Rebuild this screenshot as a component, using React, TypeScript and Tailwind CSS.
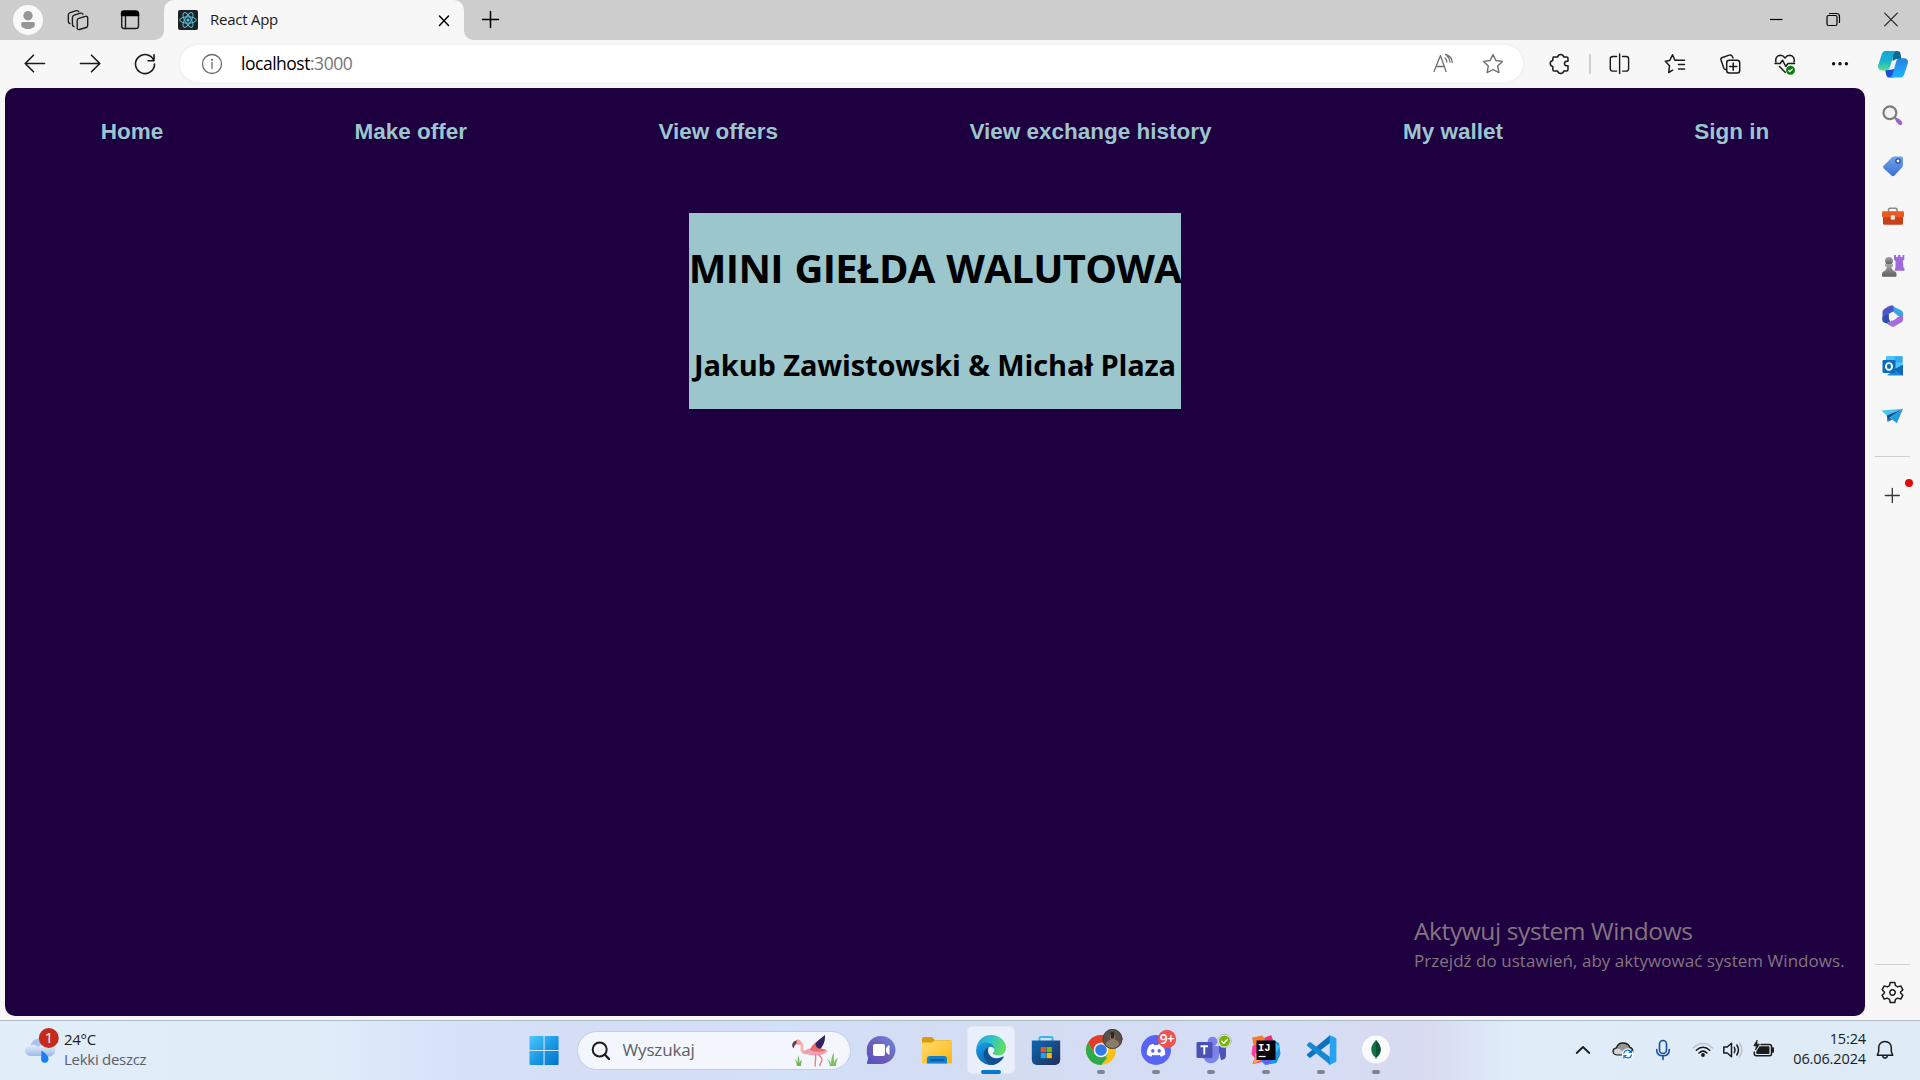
import React from 'react';

type IconProps = {
  w?: number;
  h?: number;
  color?: string;
  stroke?: number;
  className?: string;
  children: React.ReactNode;
};

function Icon({ w = 30, h = 30, color = '#1a1a1a', stroke = 1.3, className = '', children }: IconProps) {
  return (
    <svg
      width={w}
      height={h}
      viewBox={`0 0 ${w} ${h}`}
      fill="none"
      stroke={color}
      strokeWidth={stroke}
      strokeLinecap="round"
      strokeLinejoin="round"
      className={`block shrink-0 overflow-visible ${className}`}
    >
      {children}
    </svg>
  );
}

const starPath =
  'M15 5.6 L17.9 11.5 L24.4 12.4 L19.7 17 L20.9 23.6 L15 20.5 L9.1 23.6 L10.3 17 L5.6 12.4 L12.1 11.5 Z';

function TitleBar() {
  return (
    <div className="flex h-10 items-center bg-[#cdcdcd]">
      <Icon className="ml-[13px]" stroke={0}>
        <circle cx="15" cy="15" r="15" fill="#f9f9f9" />
        <circle cx="15" cy="10.7" r="4.7" fill="#979797" />
        <path d="M10 17h10a2 2 0 0 1 2 2c0 3.600-3.200 5-7 5s-7-1.400-7-5a2 2 0 0 1 2-2z" fill="#979797" />
      </Icon>
      <Icon className="ml-5" stroke={1.35}>
        <path d="M15.700 13.300l6.800-2c1.300-.3 2.200.3 2.200 1.600v7.600c0 1-.5 1.700-1.500 2l-6.800 2c-1.300.3-2.200-.3-2.200-1.600v-7.600c0-1 .5-1.700 1.500-2z" />
        <path d="M11 21.500c-1.200-.3-1.600-1.100-1.600-2.200v-6.800c0-1.300.6-2 1.800-2.400l6.300-1.900c1.300-.3 2 .1 2.400 1" />
        <path d="M6.900 18.500c-1.200-.3-1.600-1.100-1.600-2.200V10c0-1.300.6-2 1.800-2.400l6.300-1.900c1.300-.3 2 .1 2.400 1" />
      </Icon>
      <Icon className="ml-[22px]" stroke={1.4}>
        <rect x="6.700" y="6.700" width="16.800" height="16.800" rx="2.600" />
        <path d="M6.500 10.500V8.500a2.500 2.500 0 0 1 2.500-2.500h12a2.500 2.500 0 0 1 2.500 2.500v2z" fill="#000" stroke="#000" />
        <path d="M10.500 11v12.500" />
      </Icon>
      <svg width="9" height="10" className="ml-[10px] block self-end">
        <path d="M9 0v10H0a9.500 9.500 0 0 0 9-10z" fill="#f7f7f7" />
      </svg>
      <div className="flex h-10 w-[300px] items-center rounded-t-[10px] bg-[#f7f7f7] pl-[14px]">
        <svg width="20" height="20" viewBox="0 0 20 20" fill="none" stroke="#53c1de" strokeWidth="1">
          <rect width="20" height="20" rx="2" fill="#222" stroke="none" />
          <circle cx="10" cy="10" r="1.600" fill="#53c1de" stroke="none" />
          <ellipse cx="10" cy="10" rx="8.300" ry="3.200" />
          <ellipse cx="10" cy="10" rx="8.300" ry="3.200" transform="rotate(60 10 10)" />
          <ellipse cx="10" cy="10" rx="8.300" ry="3.200" transform="rotate(120 10 10)" />
        </svg>
        <span className="mt-[-2px] ml-[12px] text-[15px] leading-5 tracking-[-0.250px] text-[#1a1a1a]">React App</span>
        <Icon className="mr-[5px] ml-auto" stroke={1.5} color="#000">
          <path d="M10.500 11l9 9.500M19.500 11l-9 9.500" />
        </Icon>
      </div>
      <svg width="9" height="10" className="block self-end">
        <path d="M0 0v10h9a9.500 9.500 0 0 1-9-10z" fill="#f7f7f7" />
      </svg>
      <Icon className="ml-[3px]" stroke={1.5} color="#000">
        <path d="M6.500 14.500h16M14.500 6.500v16" />
      </Icon>
      <div className="ml-auto flex">
        <Icon className="mr-[27px]" stroke={1.2} color="#000">
          <path d="M9 14.500h12.500" strokeLinecap="butt" />
        </Icon>
        <Icon className="mr-7" stroke={1.2} color="#000">
          <rect x="9" y="10.500" width="10" height="10" rx="1.500" />
          <path d="M11.500 8.500h7a3 3 0 0 1 3 3v6" />
        </Icon>
        <Icon className="mr-[14px]" stroke={1.2} color="#222">
          <path d="M8.700 8.200l12.600 12.600M21.300 8.200L8.700 20.800" />
        </Icon>
      </div>
    </div>
  );
}

function ToolCell({ children }: { children: React.ReactNode }) {
  return <div className="flex w-[55px] shrink-0 justify-center">{children}</div>;
}

function Copilot() {
  return (
    <svg width="30" height="27" viewBox="0 0 30 27" className="block">
      <defs>
        <linearGradient id="cpA" x1="0" y1="0" x2="0" y2="1">
          <stop offset="0" stopColor="#12a3dc" />
          <stop offset=".55" stopColor="#18b5c8" />
          <stop offset="1" stopColor="#5ee08e" />
        </linearGradient>
        <linearGradient id="cpB" x1="0" y1="0" x2="0" y2="1">
          <stop offset="0" stopColor="#2b7fe0" />
          <stop offset="1" stopColor="#19b6ff" />
        </linearGradient>
      </defs>
      <path d="M14 0h5.500c2 0 2.600 1 3 2.600L23.500 8h-5l-4 2z" fill="#0b6a94" />
      <path d="M16 26.500h-4.500c-2 0-2.700-1-3.200-2.600L7 18.800h6l3-1z" fill="#1950d8" />
      <path d="M7.500 0h11c-1.700.6-2.400 2-3 4l-3.300 11.500c-.7 2.500-2 4-4.700 4H4c-3 0-4.700-2-3.700-5.500L3.500 4C4.300 1.500 5.500 0 7.500 0z" fill="url(#cpA)" />
      <path d="M22.500 26.500H12c1.500-.6 2.200-2 2.800-4L18 11c.7-2.500 2-3.700 4.500-3.700H26c3 0 4.700 2 3.700 5.400l-3.200 9.800c-.8 2.500-2 4-4 4z" fill="url(#cpB)" />
    </svg>
  );
}

function Toolbar() {
  return (
    <div className="flex h-12 items-center bg-[#f7f7f7] pl-[7.500px]">
      <ToolCell>
        <Icon stroke={1.6}>
          <path d="M24.500 14.500H5.500M13.500 6.200L5.200 14.500l8.300 8.300" />
        </Icon>
      </ToolCell>
      <ToolCell>
        <Icon stroke={1.6}>
          <path d="M5.500 14.500h19M16.500 6.200l8.300 8.300-8.300 8.300" />
        </Icon>
      </ToolCell>
      <ToolCell>
        <Icon stroke={1.6}>
          <path d="M23.800 11.500A9.500 9.500 0 1 0 24.500 15M24 5.800v6h-6" />
        </Icon>
      </ToolCell>
      <div className="mt-[-1px] ml-[7.500px] flex h-[37px] w-[1343px] shrink-0 items-center rounded-full bg-white shadow-[0_0_4px_rgba(0,0,0,0.06)]">
        <Icon className="mt-px ml-[17px]" color="#6b6b6b" stroke={1.3}>
          <circle cx="15" cy="15" r="9.500" />
          <path d="M15 13.500v6" />
          <circle cx="15" cy="10.800" r=".5" />
        </Icon>
        <span className="mt-[-1px] ml-[14px] text-[17.500px] leading-6 tracking-[-0.480px] text-black">
          localhost<span className="text-[#767676]">:3000</span>
        </span>
        <Icon className="mt-px ml-auto" color="#6f6f6f" stroke={1.3}>
          <path d="M6 22.500L12.500 6.500L18 22.500M8.500 17.500h7.500" />
          <path d="M17 9c1.200 1 1.800 2.300 1.900 4M19.200 7c1.700 1.500 2.600 3.500 2.700 6M17.500 5.500c4 1 6.500 4 6.800 8" />
        </Icon>
        <Icon className="mt-px mr-[15.500px] ml-[19.500px]" color="#6f6f6f" stroke={1.4}>
          <path d={starPath} />
        </Icon>
      </div>
      <div className="ml-[9px]" />
      <ToolCell>
        <Icon stroke={1.5}>
          <path d="M8 9h4.300a3.200 3.200 0 0 1 6.200 0h2.700a1.500 1.500 0 0 1 1.500 1.500v2.700h-1.200a2.300 2.300 0 0 0 0 4.600h1.200v3.700a1.500 1.500 0 0 1-1.500 1.500h-2.700a3.200 3.200 0 0 1-6.200 0H9a1.500 1.500 0 0 1-1.500-1.500v-3a3.100 3.100 0 0 1 0-6.100V10.500A1.500 1.500 0 0 1 9 9z" transform="translate(0.3 -1)" />
        </Icon>
      </ToolCell>
      <div className="mr-[1px] ml-[2px] h-5 w-[2px] shrink-0 bg-[#d0d0d0]" />
      <ToolCell>
        <Icon stroke={1.4}>
          <path d="M12 7.500H8A2.300 2.300 0 0 0 5.700 9.800v10A2.300 2.300 0 0 0 8 22.100h4M18 7.500h3.700A2.300 2.300 0 0 1 24 9.800v10a2.300 2.300 0 0 1-2.300 2.300H18M15 5v19.500" transform="translate(-.4 0)" />
        </Icon>
      </ToolCell>
      <ToolCell>
        <Icon stroke={1.5}>
          <path d="M16.500 11.300h-1.600L12.500 5.800 9.700 11.500 5.300 12.300l4.200 4.500-.8 6.700 4-2.300" />
          <path d="M16.500 11.300h8M18.500 15.500h6M18.500 20h6" />
        </Icon>
      </ToolCell>
      <ToolCell>
        <Icon stroke={1.5}>
          <path d="M10.500 20.500c-1-.2-1.600-.8-1.900-1.900L6 10.900c-.3-1.200.1-2 1.300-2.400l7-2.400c1.400-.4 2.400 0 3 1.400l.7 1.500" />
          <rect x="11.700" y="11.200" width="13" height="12.800" rx="2.500" />
          <path d="M18.200 14v7.200M14.600 17.600h7.200" />
        </Icon>
      </ToolCell>
      <ToolCell>
        <Icon stroke={1.5}>
          <path d="M6 13c-1-3.500 1-6.600 4.200-6.700 2 0 3.600 1 4.800 2.700 1.200-1.700 2.800-2.700 4.800-2.700 3.200.1 5.200 3.200 4.200 6.700" />
          <path d="M5 14.500h5.200l2.300-3.300 3.300 6.300 2.200-3h6.500M9.500 17.500l5.700 5.700" />
          <circle cx="20.500" cy="21.300" r="4.500" fill="#107c10" stroke="none" />
          <path d="M18.700 21.500l1.200 1.200 2.400-2.500" stroke="#fff" strokeWidth="1.200" />
        </Icon>
      </ToolCell>
      <ToolCell>
        <Icon stroke={0}>
          <circle cx="8.600" cy="14.700" r="1.700" fill="#111" />
          <circle cx="15" cy="14.700" r="1.700" fill="#111" />
          <circle cx="21.400" cy="14.700" r="1.700" fill="#111" />
        </Icon>
      </ToolCell>
      <div className="ml-[11px]">
        <Copilot />
      </div>
    </div>
  );
}

const navItems = ['Home', 'Make offer', 'View offers', 'View exchange history', 'My wallet', 'Sign in'];

function Page() {
  return (
    <main className="relative flex h-[928px] w-[1860px] shrink-0 flex-col items-center overflow-hidden rounded-[10px] bg-[#1e0041]">
      <nav className="flex h-[87px] w-full items-center justify-around font-['Liberation_Sans',Arial,sans-serif] text-[22.500px] font-bold text-[#9bc6cc]">
        {navItems.map((n) => (
          <a key={n}>{n}</a>
        ))}
      </nav>
      <header className="mt-[38px] flex h-[196px] w-[492px] flex-col items-center bg-[#9bc6cc] pt-[28px] whitespace-nowrap text-black">
        <h1 className="text-[40px] leading-[54px] font-bold tracking-[-0.700px] [word-spacing:2px]">MINI GIEŁDA WALUTOWA</h1>
        <h2 className="mt-[50px] text-[29px] leading-10 font-bold tracking-[-0.130px]">Jakub Zawistowski &amp; Michał Plaza</h2>
      </header>
      <div className="absolute right-5 bottom-[42px] w-[431px] whitespace-nowrap text-[#83757f]">
        <div className="text-[24.500px] leading-[34px] tracking-[-0.400px]">Aktywuj system Windows</div>
        <div className="text-[17px] leading-[26px] tracking-[0.040px]">Przejdź do ustawień, aby aktywować system Windows.</div>
      </div>
    </main>
  );
}

function SideCell({ children }: { children: React.ReactNode }) {
  return <div className="flex h-[50px] items-center">{children}</div>;
}

function Sidebar() {
  return (
    <aside className="flex flex-1 flex-col items-center bg-[#f7f7f7] pt-[3px]">
      <SideCell>
        <Icon stroke={2.2} color="#7d7d7d">
          <circle cx="11.900" cy="11.800" r="6.400" fill="#f2f2f2" />
          <path d="M16.500 16.300l2 2" />
          <path d="M19.800 19.600l2.500 2.500" stroke="#9a64d0" strokeWidth="4.200" />
        </Icon>
      </SideCell>
      <SideCell>
        <Icon stroke={0} className="-ml-px">
          <defs>
            <linearGradient id="tag" x1="0" y1="0" x2="0" y2="1">
              <stop offset="0" stopColor="#6fa5ee" />
              <stop offset="1" stopColor="#3f6fd0" />
            </linearGradient>
          </defs>
          <path d="M17 5.500h7c1.500 0 2 .6 2 2v6.500c0 1-.3 1.700-1 2.400l-7.500 8c-1 1-2 1-3 0l-7.700-7c-1-1-1-2 0-3l8-8c.6-.6 1.300-.9 2.200-.9z" fill="url(#tag)" />
          <circle cx="21" cy="10" r="2.100" fill="#fff" stroke="#2c4a9a" strokeWidth="1.300" />
        </Icon>
      </SideCell>
      <SideCell>
        <Icon stroke={0} className="mt-[2px] -ml-px">
          <path d="M11.500 9.500V8c0-1.200.6-1.800 1.800-1.800h5c1.200 0 1.800.6 1.800 1.800v1.500" fill="none" stroke="#8a8a8a" strokeWidth="1.600" />
          <rect x="6" y="13" width="20" height="9.800" rx="1.500" fill="#c8401a" />
          <rect x="5" y="9.200" width="22" height="6" rx="1.300" fill="#e85a22" />
          <rect x="13.800" y="13.200" width="4.200" height="4.600" rx="1.200" fill="#e2e2e2" />
        </Icon>
      </SideCell>
      <SideCell>
        <Icon stroke={0} className="-ml-px">
          <defs>
            <linearGradient id="pawn" x1="0" y1="0" x2="0" y2="1">
              <stop offset="0" stopColor="#a5a5a5" />
              <stop offset="1" stopColor="#606060" />
            </linearGradient>
          </defs>
          <path d="M17 4h2v2h2V4h2.500v2h2V4h1.800v4.500l-1.500 1.500.7 6.500 1 1v2.300H17.500l1-3.500v-6L17 8.500z" fill="#9f6bdc" />
          <circle cx="12" cy="9.800" r="3.900" fill="url(#pawn)" />
          <path d="M8 13.200h8v2.200h-1.500c0 2 .6 3 2.500 4.500 1.500.5 2.500 1.200 2.500 3.600v1.200c0 .6-.3 1-1 1H6c-.7 0-1-.4-1-1v-1.200c0-2.400 1-3.100 2.500-3.600 1.700-1.500 2.300-2.500 2.300-4.500H8z" fill="url(#pawn)" />
        </Icon>
      </SideCell>
      <SideCell>
        <Icon stroke={0} className="-ml-px">
          <path d="M14.500 4.500L24 9.300c1.300.7 2 1.700 2 3v5.500l-6-3.500-4-4-5 2.800z" fill="#35a8e4" />
          <path d="M14.500 4.500c-1.500 0-2.500.5-7.500 3.700C6 9 5.500 10 5.500 11.500v7c0 1.300.7 2.300 1.800 3l4.200 1.500V13l5-2.800V5c-.7-.4-1.300-.5-2-.5z" fill="#4a55c8" />
          <path d="M5.500 16v3c0 1.200.8 2 1.800 2.500 2 .8 4 .3 6-1L12 18v-5z" fill="#2b4fb0" />
          <path d="M26 14v4.500c0 1.300-.6 2.200-1.800 3l-6.400 3.800c-1.200.7-2.400.7-3.600 0L8.500 22c1.500.2 2.500-.1 4-1l8-4.700z" fill="#a56cdc" />
          <path d="M15.700 11.200l3.800 2.200v4l-3.800 2.200-3.800-2.200v-4z" fill="#f7f7f7" />
        </Icon>
      </SideCell>
      <SideCell>
        <Icon stroke={0} className="-ml-px">
          <rect x="9" y="5" width="16.500" height="16" rx="1.200" fill="#4ec3f5" />
          <rect x="17.500" y="5.500" width="8" height="6" fill="#35abef" />
          <path d="M10 24.500h15c.7 0 1-.4 1-1V13.500l-9 5z" fill="#1a86d8" />
          <path d="M17 18.500l9-4.500v9.500c0 .5 0 .6-.3.900z" fill="#1367b5" />
          <rect x="5.500" y="9" width="13" height="13" rx="1.200" fill="#0b6cc4" />
          <ellipse cx="12" cy="15.500" rx="3.100" ry="3.400" fill="none" stroke="#fff" strokeWidth="1.900" />
        </Icon>
      </SideCell>
      <SideCell>
        <Icon stroke={0} className="-ml-px">
          <path d="M4.500 9.500L26 7.800 10 15z" fill="#4fc3f0" />
          <path d="M10 14.500L26 7.800l-13.500 9L10.500 21z" fill="#0a4f92" />
          <path d="M13 16.500L26 7.800l-6.200 14.400z" fill="#219bdf" />
          <path d="M10.500 21l2.300-4.500 2.400 2z" fill="#115fa8" />
        </Icon>
      </SideCell>
      <div className="mt-[15px] h-px w-[35px] bg-[#cfcfcf]" />
      <div className="relative mt-[23px]">
        <Icon stroke={1.300} color="#333">
          <path d="M7.300 15.500h14M14.300 8.500v14" />
        </Icon>
        <div className="absolute top-[-1px] left-[27px] size-2 rounded-full bg-[#e00b0b]" />
      </div>
      <div className="mt-auto h-px w-[35px] bg-[#cfcfcf]" />
      <Icon className="mt-[13px] mb-[12px]" stroke={1.500}>
        <g transform="translate(14.500 14.500)">
          <path d="M-2.300-10h4.600l.7 3.200 2.200 1.200 3.100-1 2.100 3.900-2.300 2.200v1l2.300 2.200-2.100 3.900-3.100-1-2.200 1.200-.7 3.200h-4.600l-.7-3.200-2.200-1.200-3.100 1-2.100-3.900 2.300-2.200v-1l-2.300-2.200 2.100-3.900 3.100 1 2.200-1.200z" />
          <circle r="2.700" />
        </g>
      </Icon>
    </aside>
  );
}

function AppCell({ state, children }: { state?: 'active' | 'running'; children: React.ReactNode }) {
  return (
    <div className="relative flex h-[59px] w-[55px] shrink-0 justify-center">
      {state === 'active' && <div className="absolute top-[5px] left-[3px] h-[48px] w-12 rounded-[5px] border border-[#e3e8f3] bg-[#eaf0fb]" />}
      <div className="relative mt-[14px]">{children}</div>
      {state === 'active' && <div className="absolute top-[49px] left-[17px] h-1 w-5 rounded-full bg-[#0078d4]" />}
      {state === 'running' && <div className="absolute top-[49px] left-[23px] h-1 w-2 rounded-full bg-[#7f8590]" />}
    </div>
  );
}

function Flamingo() {
  return (
    <svg width="50" height="34" viewBox="0 0 50 34" fill="none" strokeLinecap="round" className="block">
      <path d="M6 32c-.5-3-1-5-2.500-7 2 1 2.500 2.500 3 4 0-3 .3-5 1-7.500.8 2.500 1 5 .9 7.500.8-1.500 1.600-2.500 2.800-3.500-.8 2.500-1.200 4.500-1.200 6.500z" fill="#74b55c" />
      <path d="M39 32c-.5-3-1.500-5-3-7 2.500 1 3.500 3 4 5 0-4 .8-8 3-12-.2 4-.2 7 0 11 .8-3 2-4 4-5-1.500 3-2 5-2 8z" fill="#82bd63" />
      <path d="M7.500 8.500c3 .2 4 2 3.500 5-.5 3.500.5 5 4 5.500" stroke="#f5b0a8" strokeWidth="2.800" />
      <circle cx="7" cy="8.300" r="2.700" fill="#f3a39c" />
      <path d="M5.500 6.500C2.500 7 .8 9.500 1.300 12.500l1.200 2c.8-1.800.8-3.500 3-5z" fill="#5b3a5a" />
      <path d="M12 17.500c3-2 7-3.500 11-3.500 5 0 9 1.500 13.500 3-3 3.500-7.500 4.500-12 4.500s-9-.8-12.500-4z" fill="#f0a0ae" />
      <path d="M19 16c1.500-6 8-9 15-14.500 0 6-1.500 10-4 13l6 1.500c-5 2-12 2.500-17 0z" fill="#ea6b70" />
      <path d="M24.500 9.500c2.500-3.500 5.500-5 9.500-8.500.2 6-1.300 9.500-4.500 13.500-3 0-5-2-5-5z" fill="#2f2363" />
      <path d="M24.500 21c.6 4-.6 7-.3 11M28 21c2 2.500 3.500 3 3 5l-2.300 5.500" stroke="#ee7f86" strokeWidth="1.400" />
    </svg>
  );
}

function Taskbar() {
  return (
    <footer className="flex h-[60px] items-start border-t border-[#b0bac4] bg-[linear-gradient(90deg,#e1edf8_0%,#e0ecf8_17%,#d7e3fb_23%,#d5def5_30%,#d2e0f8_41%,#d4dcf2_52%,#d5def6_66%,#d7daf0_74%,#e0edf9_79%,#deebf7_100%)]">
      <div className="flex h-[59px] w-[517px] shrink-0 items-start pl-[25px]">
        <svg width="40" height="40" viewBox="0 0 40 40" className="mt-[7px] block">
          <defs>
            <linearGradient id="cloud" x1="0" y1="0" x2="0" y2="1">
              <stop offset="0" stopColor="#e6eefb" />
              <stop offset="1" stopColor="#9dbbea" />
            </linearGradient>
          </defs>
          <circle cx="14" cy="19" r="8.500" fill="#a9c3ef" />
          <circle cx="23" cy="22" r="7" fill="#a9c3ef" />
          <path d="M6 17.500c1-1 5-1.500 7 1.500 1-2 5-2.500 7-.5 6-3 10 0 10 3.500 0 4-3 6-6 6H7c-4 0-7-2-7-5.500 0-3 3-5 6-5z" fill="url(#cloud)" />
          <path d="M16.500 22.500c3 2 7 5 7 8.500a3.700 3.700 0 0 1-7.400 0z" fill="#1a7df0" />
          <circle cx="23.800" cy="10" r="10" fill="#c42b1c" />
          <text x="23.800" y="15" textAnchor="middle" fontSize="14.500" fill="#fff" fontFamily="Open Sans">1</text>
        </svg>
        <div className="mt-[8px] -ml-[1px] text-[15px] leading-5 tracking-[-0.280px]">
          <div className="text-[#1b1b1b]">24°C</div>
          <div className="text-[#5b6067]">Lekki deszcz</div>
        </div>
      </div>
      <AppCell>
        <svg width="30" height="30" viewBox="0 0 30 30" className="-ml-px block">
          <defs>
            <linearGradient id="win" x1="0" y1="0" x2="1" y2="1">
              <stop offset="0" stopColor="#4cc8fb" />
              <stop offset=".5" stopColor="#1b9be6" />
              <stop offset="1" stopColor="#0072cc" />
            </linearGradient>
          </defs>
          <path d="M1.500 1h13v14h-14V2a1 1 0 0 1 1-1zM15.600 1h13a1 1 0 0 1 1 1v13h-14zM.5 16h14v14h-13a1 1 0 0 1-1-1zM15.600 16h14v13a1 1 0 0 1-1 1h-13z" fill="url(#win)" />
        </svg>
      </AppCell>
      <div className="mt-[10px] ml-[4.500px] flex h-[39px] w-[274px] shrink-0 items-center rounded-full border border-[#c3cde0] bg-[#f3f6fd]">
        <svg width="20" height="20" viewBox="0 0 20 20" fill="none" stroke="#1d1d1d" className="ml-[13px] block">
          <circle cx="8.700" cy="8.500" r="7" strokeWidth="2" />
          <path d="M13.700 13.500l4.300 4.500" strokeWidth="2.400" strokeLinecap="round" />
        </svg>
        <span className="mt-[-1px] ml-[12px] text-[17px] leading-6 tracking-[-0.150px] text-[#5c5f66]">Wyszukaj</span>
        <div className="mr-[9px] ml-auto">
          <Flamingo />
        </div>
      </div>
      <div className="ml-[3px] flex shrink-0">
        <AppCell>
          <Icon stroke={0}>
            <defs>
              <linearGradient id="chat" x1="1" y1="0" x2="0" y2="1">
                <stop offset="0" stopColor="#6d8ae0" />
                <stop offset=".5" stopColor="#7060b8" />
                <stop offset="1" stopColor="#5450c0" />
              </linearGradient>
            </defs>
            <path d="M15 1c8 0 14.500 6 14.500 13.800C29.500 22.500 23 29 15 29H2c-1 0-1.300-.8-1-1.500l1.200-4.200A13.500 13.500 0 0 1 .8 15C.8 7 7 1 15 1z" fill="url(#chat)" />
            <rect x="7" y="9" width="12" height="12" rx="2" fill="#fff" />
            <path d="M20 13l2.500-2.500c.5-.4 1-.3 1 .5v8c0 .8-.5.900-1 .5L20 17z" fill="#fff" />
          </Icon>
        </AppCell>
        <AppCell>
          <Icon w={31} stroke={0}>
            <defs>
              <linearGradient id="fold" x1="0" y1="0" x2="1" y2="1">
                <stop offset="0" stopColor="#ffdb6e" />
                <stop offset="1" stopColor="#fcb714" />
              </linearGradient>
            </defs>
            <path d="M1 4a2 2 0 0 1 2-2h8l3 3.200h15.500a1 1 0 0 1 1 1V12H1z" fill="#dd9a0c" />
            <path d="M1 9c0-1 .5-1.500 1.500-1.500H11l2.500-2h16c1 0 1.500.5 1.500 1.500v20.500c0 .6-.4 1-1 1H2c-.6 0-1-.4-1-1z" fill="url(#fold)" />
            <path d="M6 28.500V24a3 3 0 0 1 3-3h14a3 3 0 0 1 3 3v4.500z" fill="#1180cf" />
            <path d="M10 25h12.500" stroke="#0a4f8c" strokeWidth="1.400" />
          </Icon>
        </AppCell>
        <AppCell state="active">
          <Icon stroke={0}>
            <defs>
              <linearGradient id="edA" x1="0" y1="0" x2="1" y2=".3">
                <stop offset="0" stopColor="#2b9de0" />
                <stop offset=".5" stopColor="#2fc0d0" />
                <stop offset="1" stopColor="#5fdc62" />
              </linearGradient>
              <linearGradient id="edB" x1="0" y1="0" x2=".6" y2="1">
                <stop offset="0" stopColor="#1ba2e2" />
                <stop offset="1" stopColor="#0c62b8" />
              </linearGradient>
            </defs>
            <path d="M.2 14C1 6 7 0 15 0c8.500 0 15 6 15 12.500 0 5-3.500 8-8 8-3 0-5.200-1-5.200-2.200 0-1 1.500-1.600 1.500-4 0-3-3-5.300-7-5.300-5 0-9 2-11.100 5z" fill="url(#edA)" />
            <path d="M0 15.500C1 10 6 7.500 11 7.800c4.500.3 7.300 3.200 7.300 6.500-1-2-3-2.800-5-2.300-3 .8-5 4-4.300 8 .7 4.500 4.500 8.300 10 9.500A15 15 0 0 1 0 15.500z" fill="url(#edB)" />
            <path d="M13 12c-1.500 2-1.300 5 0 7.300 2.500 4.200 8.500 5.200 14 2.200.7-.3 1.100.2.700.8A15 15 0 0 1 17 29.900c-5-.9-9-5-9.300-10C7.500 16 10 12.800 13 12z" fill="#134f93" />
          </Icon>
        </AppCell>
        <AppCell>
          <Icon stroke={0}>
            <defs>
              <linearGradient id="store" x1="0" y1="0" x2="1" y2="1">
                <stop offset="0" stopColor="#0d67b5" />
                <stop offset="1" stopColor="#242e58" />
              </linearGradient>
            </defs>
            <path d="M8.500 6V3.500C8.500 2.500 9 2 10 2h10c1 0 1.500.5 1.500 1.500V6" fill="none" stroke="#35b8ee" strokeWidth="1.900" />
            <path d="M.8 5.500h28.400V25a5 5 0 0 1-5 5H5.800a5 5 0 0 1-5-5z" fill="url(#store)" />
            <rect x="9.700" y="12" width="5.200" height="5.200" fill="#f25022" />
            <rect x="15.600" y="12" width="5.200" height="5.200" fill="#7fba00" />
            <rect x="9.700" y="18" width="5.200" height="5.200" fill="#16a6ee" />
            <rect x="15.600" y="18" width="5.200" height="5.200" fill="#ffb902" />
          </Icon>
        </AppCell>
        <AppCell state="running">
          <Icon stroke={0}>
            <circle cx="15" cy="15" r="15" fill="#fbc116" />
            <path d="M2 7.500A15 15 0 0 1 28 7.500H15L8.500 18.800z" fill="#e33b2e" />
            <path d="M2 7.500L8.500 18.800 15 22.500h6.500L15 30A15 15 0 0 1 2 7.500z" fill="#2da94f" />
            <path d="M21.500 18.800L15 30l-2-7.500z" fill="#2da94f" />
            <circle cx="15" cy="15" r="7.300" fill="#f4f4f4" />
            <circle cx="15" cy="15" r="5.800" fill="#3079e8" />
            <circle cx="26.500" cy="4" r="10" fill="#5a5046" />
            <path d="M19.500 11c0-4 3-5.500 5-6.500-1.500-2-1-6 2-6s3.500 4 2 6c3 .8 5 2.500 5 6.500a10 10 0 0 1-14 0z" fill="#8b7b69" />
            <path d="M24.500-2c1-1.500 3-1.500 4 0l-.5 5.500h-3z" fill="#2c2723" />
            <circle cx="26.500" cy="4" r="9.500" fill="none" stroke="#4a443d" strokeWidth="1" />
          </Icon>
        </AppCell>
        <AppCell state="running">
          <Icon stroke={0}>
            <circle cx="15" cy="15" r="15" fill="#5865f2" />
            <path d="M9 10.200c1.500-.8 3-1.200 4-1.200l.6 1.200c1.300-.2 2.500-.2 3.800 0L18 9c1.300.1 2.800.5 4 1.200 2 3 3 6 2.800 9.300-1.500 1.200-3 1.900-4.500 2.200l-1-1.800c-2.500.6-5 .6-7.500 0l-1 1.800c-1.500-.3-3-1-4.500-2.200C6 16.200 7 13.200 9 10.200z" fill="#fff" transform="translate(-.5 0)" />
            <ellipse cx="11.800" cy="15.800" rx="1.700" ry="1.900" fill="#5865f2" />
            <ellipse cx="18.200" cy="15.800" rx="1.700" ry="1.900" fill="#5865f2" />
            <circle cx="26" cy="4" r="9.200" fill="#ee5350" />
            <text x="26" y="8.800" textAnchor="middle" fontSize="13.500" fill="#fff" fontFamily="Open Sans" fontWeight="600" letterSpacing="-.5">9+</text>
          </Icon>
        </AppCell>
        <AppCell state="running">
          <Icon stroke={0}>
            <path d="M21.500 11H30v9.500c0 3-2.500 4.500-5 4.500z" fill="#4c54b8" />
            <circle cx="16.500" cy="6.500" r="4.800" fill="#7b83eb" />
            <path d="M8 11h15v9.500a8 8 0 0 1-15.500 2.500z" fill="#7b83eb" />
            <rect x=".5" y="7" width="16" height="16" rx="1.200" fill="#4a52b5" />
            <path d="M4.500 11.200h7.500M8.300 11.200v8.300" stroke="#fff" strokeWidth="1.900" strokeLinecap="butt" />
            <circle cx="28.500" cy="6" r="7" fill="#f4f6fb" />
            <circle cx="28.500" cy="6" r="6.700" fill="none" stroke="#8d98a0" strokeWidth=".7" />
            <circle cx="28.500" cy="6" r="5.500" fill="#79b300" />
            <path d="M25.800 6.200l2 2 3.500-3.700" fill="none" stroke="#fff" strokeWidth="1.500" />
          </Icon>
        </AppCell>
        <AppCell state="running">
          <Icon stroke={0}>
            <path d="M1 2.500L11 .5l6 6-6 20L1.500 29 4 23 .5 19.500 3 12z" fill="#f7792e" />
            <path d="M1.500 11L7 9l4 18-9.500 2L4 23 .5 19z" fill="#fd3d9c" />
            <path d="M4 18l8 6-10 5 2.500-6z" fill="#f9b233" />
            <path d="M14 3l6-2.800L22 5l6 3 1.500 11-4 9L14 30l-4-4z" fill="#2390e8" />
            <path d="M20 .3L22 5l-6 1-3-3z" fill="#fc2b68" />
            <path d="M23 7l5.500 4.500-3 6z" fill="#38c6f4" />
            <path d="M12 24l7 0-2 6-5-3z" fill="#6b57ff" />
            <rect x="5.500" y="5.500" width="19" height="19.500" fill="#0b0208" />
            <text x="7" y="16" fontSize="10.500" fill="#fff" fontFamily="Liberation Mono" fontWeight="700">IJ</text>
            <path d="M7.700 21.500h7" stroke="#fff" strokeWidth="1.300" strokeLinecap="butt" />
          </Icon>
        </AppCell>
        <AppCell state="running">
          <Icon stroke={0}>
            <path d="M24 .3L1.300 19c-.6.6-.6 1.200 0 1.800l1.800 1.600c.6.500 1.100.5 1.700.1L24 8z" fill="#0c72bd" />
            <path d="M24 29.700L1.300 11c-.6-.6-.6-1.200 0-1.800l1.800-1.600c.6-.5 1.100-.5 1.700-.1L24 22z" fill="#1787d2" />
            <path d="M22.300.4c.6-.4 1.200-.4 1.900-.1l5 2.400c.9.400 1.200 1 1.200 1.800v21c0 .8-.3 1.400-1.200 1.800l-5 2.400c-.9.400-1.700.2-2.400-.5.900.5 1.900.1 1.900-1V1.800c0-1.300-.7-1.700-1.400-1.400z" fill="#27a4f0" />
          </Icon>
        </AppCell>
        <AppCell state="running">
          <Icon stroke={0}>
            <circle cx="15" cy="14.500" r="14" fill="#fafafa" />
            <path d="M15 5c2 2.500 4.700 5 4.700 9.500 0 3.500-2 6.500-4.200 8L15.300 24h-.6l-.2-1.500c-2.200-1.500-4.200-4.500-4.200-8C10.300 10 13 7.500 15 5z" fill="#12704a" />
            <path d="M15 5c2 2.500 4.700 5 4.700 9.500 0 3.500-2 6.500-4.500 8z" fill="#0b5438" />
          </Icon>
        </AppCell>
      </div>
      <div className="mt-[14px] ml-auto flex items-start">
        <Icon stroke={1.800}>
          <path d="M8.700 18l6.300-6 6.300 6" />
        </Icon>
        <Icon className="ml-[10px]" stroke={1.300}>
          <path d="M9 19.800c-3 0-4-2-4-3.500 0-2 1.500-3.300 3.500-3.500C9.500 9.500 12 8 15 8c3.500 0 6 1.700 6.800 4.300 2 .5 3 2 3 3.700 0 2-1.500 3.800-4 3.800z" fill="#969696" />
          <path d="M6 16.500c0-2 2-3 4-2.800 3 .2 5 3 7 5.500H8.500C7 19.200 6 18 6 16.500z" fill="#d4d4d4" stroke="none" />
          <circle cx="19.700" cy="19" r="5.800" fill="#fff" stroke="none" />
          <path d="M15.900 18.200a3.900 3.900 0 0 1 7.200-1.200M23.500 19.800a3.900 3.900 0 0 1-7.200 1.200M23.500 15v2.300h-2.300M15.900 23v-2.300h2.300" stroke="#1173cc" strokeWidth="1.200" />
        </Icon>
        <Icon className="ml-[10px]" stroke={1.600} color="#154f9e">
          <rect x="11.500" y="5.500" width="7" height="13" rx="3.500" />
          <path d="M8.700 14.500c0 4 2.500 6.300 6.300 6.300s6.300-2.300 6.300-6.300M15 21v3.500" />
        </Icon>
        <Icon className="ml-[10px]" stroke={1.500}>
          <path d="M5.500 13c5.500-6 13.500-6 19 0" stroke="#b9c3cd" />
          <path d="M8.300 15.200c4-4 9.400-4 13.400 0M11 18c2.500-2.300 5.500-2.300 8 0" />
          <circle cx="15" cy="20" r="1.900" fill="#1a1a1a" stroke="none" />
        </Icon>
        <Icon stroke={1.500}>
          <path d="M5.800 12h3.400l4.300-3.800v13.600L9.200 18H5.800z" />
          <path d="M16.300 12.300c1 1.700 1 3.700 0 5.400M18.800 10c2 3 2 7 0 10" />
          <path d="M21.300 8c3.200 4.300 3.200 9.700 0 14" stroke="#b9c3cd" />
        </Icon>
        <Icon stroke={1.500} className="-mr-px ml-px">
          <path d="M12 9.500h8.500a2 2 0 0 1 2 2v7.200a2 2 0 0 1-2 2H7.300a2 2 0 0 1-2-2V17" />
          <path d="M11 12h8.700v6.200H8v-1.500z" fill="#1a1a1a" />
          <path d="M23 13h1.200v4H23z" fill="#1a1a1a" />
          <path d="M8 5.500L4.800 10.800h2.700L6.500 15l4-5.800H8z" fill="#1a1a1a" strokeWidth=".8" />
        </Icon>
        <div className="-mt-[6px] w-[88px] text-right text-[14.500px] leading-5 tracking-[-0.120px] text-[#1b1b1b]">
          <div>15:24</div>
          <div>06.06.2024</div>
        </div>
        <Icon className="mr-5 ml-1" stroke={1.500}>
          <path d="M15 6.500c-3.800 0-6.300 2.800-6.300 6.300v3.700L7.300 20.300h15.400l-1.400-3.800v-3.700c0-3.500-2.500-6.300-6.300-6.300zM12.700 20.800c.3 1.500 1.200 2.200 2.300 2.200s2-.7 2.300-2.200" />
        </Icon>
      </div>
    </footer>
  );
}

export default function App() {
  return (
    <div className="flex h-[1080px] w-[1920px] flex-col overflow-hidden bg-[#f7f7f7] font-['Open_Sans','Noto_Sans',sans-serif]">
      <TitleBar />
      <Toolbar />
      <div className="flex h-[932px] pl-[5px]">
        <Page />
        <Sidebar />
      </div>
      <Taskbar />
    </div>
  );
}
